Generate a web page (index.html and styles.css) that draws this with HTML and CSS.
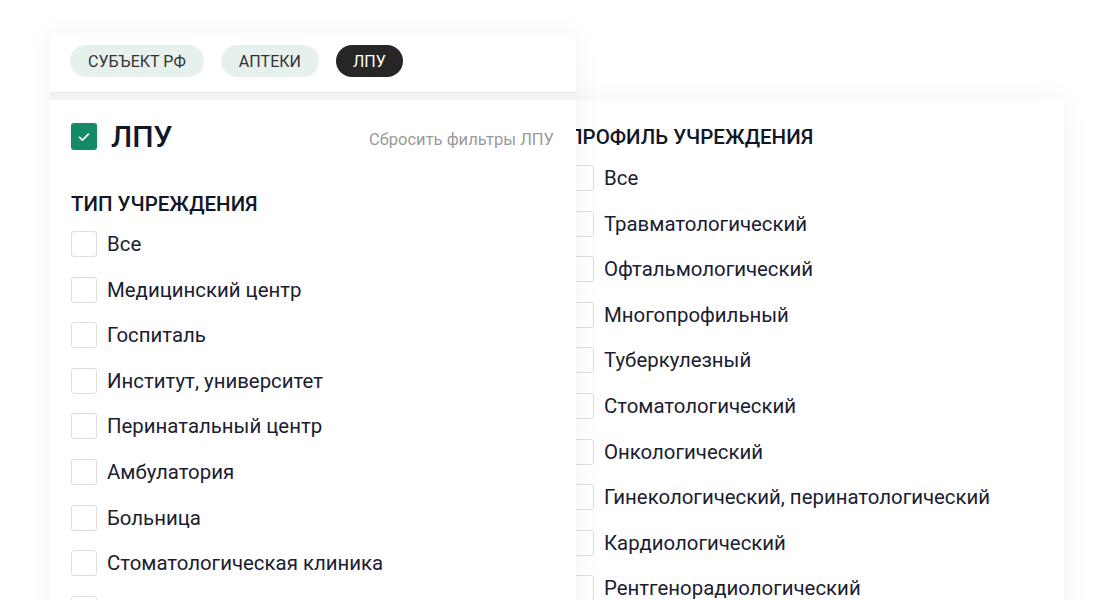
FILE: index.html
```html
<!DOCTYPE html>
<html lang="ru">
<head>
    <meta charset="UTF-8">
    <meta name="viewport" content="width=device-width, initial-scale=1.0">
    <title>Фильтры ЛПУ</title>
    <link rel="stylesheet" href="styles.css">
</head>
<body>
    <div class="stage">
        <!-- Back card: profile of the institution -->
        <div class="card card-back">
            <h2 class="section-title">Профиль учреждения</h2>
            <ul class="check-list">
                <li><span class="box"></span>Все</li>
                <li><span class="box"></span>Травматологический</li>
                <li><span class="box"></span>Офтальмологический</li>
                <li><span class="box"></span>Многопрофильный</li>
                <li><span class="box"></span>Туберкулезный</li>
                <li><span class="box"></span>Стоматологический</li>
                <li><span class="box"></span>Онкологический</li>
                <li><span class="box"></span>Гинекологический, перинатологический</li>
                <li><span class="box"></span>Кардиологический</li>
                <li><span class="box"></span>Рентгенорадиологический</li>
            </ul>
        </div>

        <!-- Front card: tabs + type of institution -->
        <div class="card-front">
            <div class="tabs">
                <button class="tab">Субъект РФ</button>
                <button class="tab">Аптеки</button>
                <button class="tab active">ЛПУ</button>
            </div>
            <div class="front-body">
                <div class="filter-header">
                    <div class="filter-title">
                        <span class="box checked">
                            <svg width="14" height="14" viewBox="0 0 14 14"><path d="M2.6 7.3l2.9 2.9 5.9-6" fill="none" stroke="#fff" stroke-width="1.7" stroke-linecap="round" stroke-linejoin="round"/></svg>
                        </span>
                        <h1>ЛПУ</h1>
                    </div>
                    <a class="reset-link" href="#">Сбросить фильтры ЛПУ</a>
                </div>
                <h2 class="section-title type-title">Тип учреждения</h2>
                <ul class="check-list">
                    <li><span class="box"></span>Все</li>
                    <li><span class="box"></span>Медицинский центр</li>
                    <li><span class="box"></span>Госпиталь</li>
                    <li><span class="box"></span>Институт, университет</li>
                    <li><span class="box"></span>Перинатальный центр</li>
                    <li><span class="box"></span>Амбулатория</li>
                    <li><span class="box"></span>Больница</li>
                    <li><span class="box"></span>Стоматологическая клиника</li>
                    <li><span class="box"></span></li>
                </ul>
            </div>
        </div>
    </div>
</body>
</html>
```

FILE: styles.css
```css
body {
    margin: 0;
    font-family: Roboto, "Liberation Sans", Arial, sans-serif;
    background-color: #fff;
    color: #1b2030;
    overflow: hidden;
}
.stage {
    position: relative;
    height: 600px;
    overflow: hidden;
}
.card-back {
    margin: 100px 0 0 549px;
    width: 515px;
    height: 700px;
    box-sizing: border-box;
    padding: 25px 19px;
    background-color: #fff;
    border-radius: 8px;
    box-shadow: 0 0 30px rgba(0,0,0,0.05);
}
.card-front {
    position: absolute;
    left: 50px;
    top: 33px;
    width: 526px;
    height: 700px;
    background-color: #f3f3f3;
    border-radius: 8px 8px 0 0;
    box-shadow: 0 0 30px rgba(0,0,0,0.05);
}
.tabs {
    display: flex;
    gap: 17px;
    padding: 12px 20px 15px;
    background-color: #fff;
    border-radius: 8px 8px 0 0;
    border-bottom: 1px solid #ececec;
}
.tab {
    height: 32px;
    padding: 0 18px;
    border: none;
    border-radius: 16px;
    background-color: #e6f1ee;
    color: #333;
    font-family: inherit;
    font-size: 16px;
    text-transform: uppercase;
    cursor: pointer;
}
.tab.active {
    padding: 0 17px;
    background-color: #262626;
    color: #fff;
}
.front-body {
    margin-top: 7px;
    height: 600px;
    padding: 23px 22px 0 21px;
    background-color: #fff;
}
.filter-header {
    display: flex;
    justify-content: space-between;
    align-items: center;
    height: 27px;
}
.filter-title {
    display: flex;
    align-items: center;
    gap: 14px;
}
.filter-title h1 {
    margin: 0;
    font-size: 30px;
    font-weight: 500;
    line-height: 27px;
    color: #121726;
}
.reset-link {
    margin-top: 6px;
    font-size: 16.5px;
    color: #9a9a9a;
    text-decoration: none;
}
.section-title {
    margin: 0;
    font-size: 20.5px;
    line-height: 24px;
    font-weight: 500;
    text-transform: uppercase;
    color: #121726;
}
.type-title {
    margin-top: 42px;
}
.check-list {
    list-style: none;
    margin: 15px 0 0;
    padding: 0;
    display: flex;
    flex-direction: column;
    gap: 19.6px;
}
.card-back .check-list {
    margin-top: 16px;
}
.check-list li {
    display: flex;
    align-items: center;
    gap: 10px;
    height: 26px;
    font-size: 20.4px;
    color: #1b2030;
}
.box {
    flex: none;
    width: 26px;
    height: 26px;
    box-sizing: border-box;
    border: 1px solid #dedede;
    border-radius: 3px;
    background-color: #fff;
}
.box.checked {
    display: flex;
    align-items: center;
    justify-content: center;
    width: 26px;
    height: 27px;
    border: none;
    background-color: #158a69;
}
```
